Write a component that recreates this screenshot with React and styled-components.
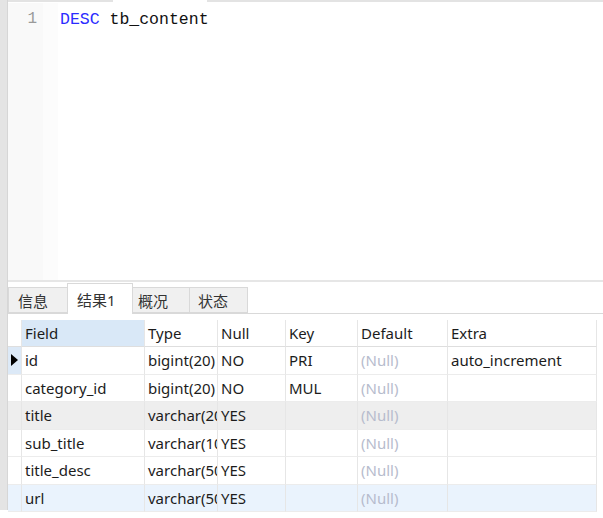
import React from 'react'
import styled, { createGlobalStyle } from 'styled-components'

const GlobalStyle = createGlobalStyle`
    html, body {
        margin: 0;
        padding: 0;
        background: #ffffff;
    }
    body {
        width: 603px;
        height: 518px;
        overflow: hidden;
        font-family: "Noto Sans", "Noto Sans CJK SC", sans-serif;
    }
`

const Page = styled.div`
    display: flex;
    width: 603px;
    height: 518px;
`

const SideBar = styled.div`
    width: 7px;
    height: 510px;
    background: #e4e4e4;
    border-right: 1px solid #d6d6d6;
`

const Main = styled.div`
    flex: 1;
    display: flex;
    flex-direction: column;
`

const TopStrip = styled.div`
    display: flex;
    height: 3px;
`

const StripPart = styled.div`
    width: ${p => p.w}px;
    flex: ${p => (p.w ? 'none' : 1)};
    border-top: 2px solid ${p => (p.gap ? 'transparent' : '#e3e3e3')};
`

const Editor = styled.div`
    display: flex;
    height: 277px;
`

const Gutter = styled.div`
    width: 35px;
    background: #f9f9f9;
    box-sizing: border-box;
    padding: 7px 6px 0 0;
    text-align: right;
    font-family: "Liberation Mono", monospace;
    font-size: 16px;
    color: #9a9a9a;
`

const FoldMargin = styled.div`
    width: 15px;
    background: #fcfcfc;
`

const Code = styled.div`
    flex: 1;
    padding: 7px 0 0 2px;
    font-family: "Liberation Mono", monospace;
    font-size: 16.5px;
    color: #111111;
    white-space: pre;
`

const Keyword = styled.span`
    color: #2b2bff;
`

const Separator = styled.div`
    height: 2px;
    background: #e6e6e6;
`

const TabBar = styled.div`
    display: flex;
    align-items: flex-end;
    height: 32px;
    box-sizing: border-box;
    border-bottom: 1px solid #d9d9d9;
`

const Tab = styled.div`
    width: ${p => p.w}px;
    height: ${p => (p.active ? 31 : 26)}px;
    box-sizing: border-box;
    margin-bottom: ${p => (p.active ? -1 : 0)}px;
    padding-left: ${p => p.pad}px;
    display: flex;
    align-items: center;
    background: ${p => (p.active ? '#ffffff' : '#f0f0f0')};
    border: 1px solid #d9d9d9;
    border-bottom: ${p => (p.active ? 'none' : '1px solid #d9d9d9')};
    margin-left: -1px;
    font-size: 15px;
    color: #333333;
    &:first-child {
        margin-left: 0;
    }
`

const Grid = styled.div`
    margin-top: 6px;
    width: 589px;
`

const cols = '14px 123px 73px 68px 72px 90px 149px'

const Row = styled.div`
    display: grid;
    grid-template-columns: ${cols};
    height: ${p => (p.head ? 27 : 27.5)}px;
    background: ${p => p.bg || '#ffffff'};
`

const Cell = styled.div`
    box-sizing: border-box;
    border-right: 1px solid #e6e6e6;
    border-bottom: 1px solid ${p => (p.head ? '#dedede' : '#ececec')};
    padding-left: 3px;
    display: flex;
    align-items: center;
    overflow: hidden;
    white-space: nowrap;
    font-size: 15px;
    color: ${p => (p.muted ? '#b7bccd' : '#1c1c1c')};
    background: ${p => p.bg || 'transparent'};
`

const Marker = styled.div`
    box-sizing: border-box;
    border-right: 1px solid #e6e6e6;
    border-bottom: 1px solid #ececec;
    display: flex;
    align-items: center;
    justify-content: center;
    background: ${p => (p.current ? '#dce9f7' : 'transparent')};
`

const headers = ['Field', 'Type', 'Null', 'Key', 'Default', 'Extra']

const rows = [
    { field: 'id', type: 'bigint(20)', nul: 'NO', key: 'PRI', extra: 'auto_increment', current: true },
    { field: 'category_id', type: 'bigint(20)', nul: 'NO', key: 'MUL', extra: '' },
    { field: 'title', type: 'varchar(200)', nul: 'YES', key: '', extra: '', bg: '#eeeeee' },
    { field: 'sub_title', type: 'varchar(100)', nul: 'YES', key: '', extra: '' },
    { field: 'title_desc', type: 'varchar(500)', nul: 'YES', key: '', extra: '' },
    { field: 'url', type: 'varchar(500)', nul: 'YES', key: '', extra: '', bg: '#eaf3fd' },
]

const tabs = [
    { label: '信息', w: 60, pad: 9 },
    { label: '结果1', w: 66, pad: 9, active: true },
    { label: '概况', w: 58, pad: 5 },
    { label: '状态', w: 59, pad: 8 },
]

const App = () => {
    return (
        <Page>
            <GlobalStyle />
            <SideBar />
            <Main>
                <TopStrip>
                    <StripPart w={105} />
                    <StripPart w={94} gap />
                    <StripPart />
                </TopStrip>
                <Editor>
                    <Gutter>1</Gutter>
                    <FoldMargin />
                    <Code>
                        <Keyword>DESC</Keyword> tb_content
                    </Code>
                </Editor>
                <Separator />
                <TabBar>
                    {tabs.map(t => (
                        <Tab key={t.label} w={t.w} pad={t.pad} active={t.active}>
                            {t.label}
                        </Tab>
                    ))}
                </TabBar>
                <Grid>
                    <Row head>
                        <Cell head />
                        {headers.map((h, i) => (
                            <Cell head key={h} bg={i === 0 ? '#d9e8f7' : undefined}>
                                {h}
                            </Cell>
                        ))}
                    </Row>
                    {rows.map(r => (
                        <Row key={r.field} bg={r.bg}>
                            <Marker current={r.current}>
                                {r.current && (
                                    <svg width="7" height="12" viewBox="0 0 7 12">
                                        <polygon points="0,0 7,6 0,12" fill="#000" />
                                    </svg>
                                )}
                            </Marker>
                            <Cell>{r.field}</Cell>
                            <Cell>{r.type}</Cell>
                            <Cell>{r.nul}</Cell>
                            <Cell>{r.key}</Cell>
                            <Cell muted>(Null)</Cell>
                            <Cell>{r.extra}</Cell>
                        </Row>
                    ))}
                </Grid>
            </Main>
        </Page>
    )
}

export default App
